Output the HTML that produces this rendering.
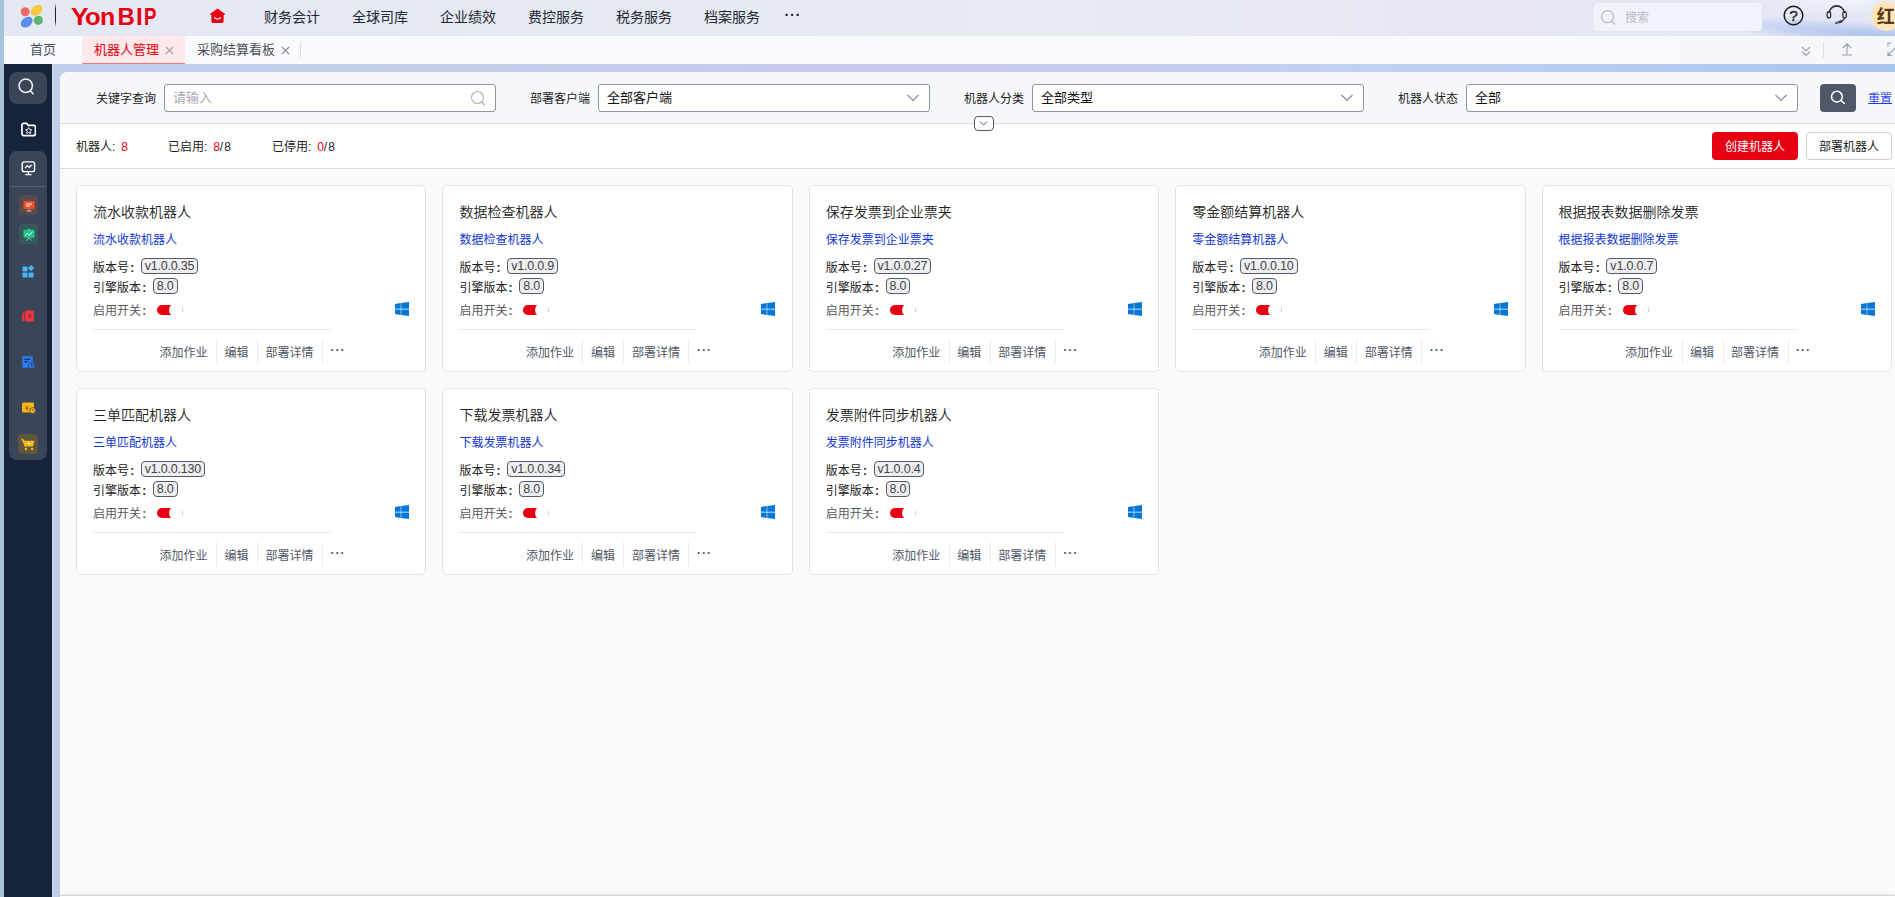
<!DOCTYPE html>
<html lang="zh-CN">
<head>
<meta charset="utf-8">
<title>机器人管理</title>
<style>
*{box-sizing:border-box;margin:0;padding:0}
html,body{width:1895px;height:897px;overflow:hidden}
body{font-family:"Liberation Sans","Noto Sans CJK SC",sans-serif;font-size:12px;color:#333;background:#bccdea;position:relative}
.abs{position:absolute}
#strip{left:0;top:0;width:4px;height:897px;background:#a5c4da}
#topbar{left:4px;top:0;width:1891px;height:36px;background:linear-gradient(90deg,#e4e8f2 0%,#e6e9f2 30%,#e9ebf3 55%,#e6e6f3 80%,#e3e7f5 100%)}
#tabbar{left:4px;top:36px;width:1891px;height:28px;background:linear-gradient(90deg,#f9fafd 0%,#f9fafd 70%,#f5f7fd 100%)}
#side{left:4px;top:64px;width:48px;height:833px;background:#15243b}
#backdrop{left:52px;top:64px;width:1843px;height:833px;background:linear-gradient(90deg,#bfcfea 0%,#c4d0ea 20%,#c9c9ea 42%,#c9cbec 55%,#c0d2f1 72%,#a8c5ee 100%)}
#panel{left:60px;top:72px;width:1835px;height:825px;background:#fafafa;border-top-left-radius:8px;overflow:hidden}
#filter{left:0;top:0;width:1835px;height:52px;background:#f7f8fc;border-bottom:1px solid #d9dbe0}
#stats{left:0;top:52px;width:1835px;height:45px;background:#fff;border-bottom:1px solid #dcdcdc}
.nav{top:9px;font-size:14px;color:#1f2733;line-height:16px;white-space:nowrap}
.tab{top:6px;font-size:13px;line-height:16px;color:#4a4f58;white-space:nowrap}
.flabel{top:20px;font-size:12px;color:#222;line-height:14px;white-space:nowrap}
.fbox{top:12px;height:28px;background:#fff;border:1px solid #8e95a5;border-radius:3px;font-size:13px;color:#111;line-height:26px;padding-left:8px;white-space:nowrap}
.card{width:350.400px;height:187px;background:#fff;border:1px solid #e1e3e8;border-radius:5px}
.card .t{left:16px;top:16.500px;font-size:14px;line-height:18px;color:#222;font-weight:350;white-space:nowrap}
.card .s{left:16px;top:46px;font-size:12px;line-height:16px;color:#1236d2;white-space:nowrap}
.card .r{left:16px;font-size:12px;line-height:16px;color:#222;white-space:nowrap}
.tag{display:inline-block;border:1px solid #555b66;border-radius:4px;background:#eeeff2;color:#444;font-size:12.500px;letter-spacing:-0.200px;line-height:14px;height:16px;padding:0 3px;vertical-align:top;margin-left:3.200px;position:relative;top:-1.500px}
.r u{text-decoration:none;font-weight:bold;margin-left:1.200px}
.card .hr{left:16px;top:143px;width:238px;height:1px;background:#e9e9e9}
.card .a{top:159px;margin-left:-0.500px;font-size:12px;line-height:16px;color:#505766;white-space:nowrap}
.card .v{top:152.500px;margin-left:-1px;width:1px;height:24px;background:#ececec}

.win{left:318px;top:115.600px;width:14px;height:14px}
.sw{left:80px;top:119px;width:26px;height:10px;border-radius:5px;background:linear-gradient(90deg,#e60012 0,#e60012 18px,#fff 18px,#fff 100%);overflow:hidden}
.sw i{position:absolute;left:12px;top:-2px;width:14px;height:14px;border-radius:7px;background:#fff}
.sw:after{content:"";position:absolute;right:0;top:2px;width:1px;height:6px;background:#f9b9be}
.dots{font-size:14px;font-weight:bold;letter-spacing:1px;color:#444;margin-top:-3px}
.stat{top:15px;font-size:12px;line-height:16px;color:#222;white-space:nowrap}
.stat b{font-weight:normal;color:#e60012;margin-left:2.500px}.stat span{letter-spacing:1.100px}
.btn{top:8px;height:28px;border-radius:4px;font-size:12px;line-height:30px;text-align:center;white-space:nowrap}
.ph{color:#a5a9b3;font-size:13px}
.chev{right:9px;top:7.200px}
</style>
</head>
<body>
<div id="strip" class="abs"></div>
<div id="topbar" class="abs" style="overflow:hidden">
<div class="abs" style="left:1700px;top:22px;width:320px;height:26px;border-radius:50%;background:radial-gradient(ellipse at 60% 50%,rgba(150,178,232,.75) 0%,rgba(160,186,236,.45) 40%,rgba(170,195,240,0) 72%);transform:rotate(5deg)"></div>
<div class="abs" style="left:1740px;top:-14px;width:200px;height:30px;border-radius:50%;background:radial-gradient(ellipse at 50% 50%,rgba(240,244,252,.9) 0%,rgba(240,244,252,0) 70%)"></div>
<svg class="abs" style="left:15px;top:4px" width="26" height="26" viewBox="0 0 26 26">
<circle cx="6.200" cy="7.800" r="4.500" fill="#ea6b66"/>
<ellipse cx="17.600" cy="6.400" rx="4.700" ry="6.400" fill="#f7c83f" transform="rotate(52 17.600 6.400)"/>
<ellipse cx="7.700" cy="18.200" rx="4.700" ry="6.400" fill="#5b8def" transform="rotate(52 7.700 18.200)"/>
<circle cx="19.300" cy="16.300" r="4.600" fill="#5cb56c"/>
</svg>
<div class="abs" style="left:51px;top:3px;width:1px;height:24px;background:linear-gradient(180deg,rgba(30,34,44,0) 0%,#1e222c 25%,#1e222c 75%,rgba(30,34,44,0) 100%)"></div>
<div class="abs" aria-label="YonBIP" style="left:67px;top:2.600px;width:100px;height:28px;font-size:24px;line-height:28px;font-weight:bold;color:#e60012"><span class="abs" style="left:0.35px;top:0;transform:scaleX(1.1);transform-origin:0 0">Y</span><span class="abs" style="left:14.2px;top:0;transform:scaleX(1.07);transform-origin:0 0">o</span><span class="abs" style="left:29.1px;top:0;transform:scaleX(1.04);transform-origin:0 0">n</span><span class="abs" style="left:46.5px;top:0;transform:scaleX(1.0);transform-origin:0 0">B</span><span class="abs" style="left:65.1px;top:0;transform:scaleX(1.0);transform-origin:0 0">I</span><span class="abs" style="left:73.0px;top:0;transform:scaleX(0.78);transform-origin:0 0">P</span></div>
<svg class="abs" style="left:205px;top:8px" width="17" height="16" viewBox="0 0 17 16"><path fill="#e60012" d="M8.5.6 16.4 6.2 14.6 7v6.3c0 1-.8 1.8-1.8 1.8H4.2c-1 0-1.800-.8-1.800-1.800V7L.6 6.200z"/><path d="M5.600 9.600c1.600 1.900 4.200 1.900 5.800 0" stroke="#fff" stroke-width="1.300" fill="none" stroke-linecap="round"/></svg>
<div class="nav abs" style="left:260px">财务会计</div>
<div class="nav abs" style="left:348px">全球司库</div>
<div class="nav abs" style="left:436px">企业绩效</div>
<div class="nav abs" style="left:524px">费控服务</div>
<div class="nav abs" style="left:612px">税务服务</div>
<div class="nav abs" style="left:700px">档案服务</div>
<div class="nav abs" style="left:780.500px;top:7px;font-weight:bold;font-size:15px;letter-spacing:.5px">···</div>
<div class="abs" style="left:1590px;top:3px;width:168px;height:28px;border-radius:4px;background:#f0f3fc"></div>
<svg class="abs" style="left:1596px;top:9px" width="17" height="17" viewBox="0 0 17 17"><circle cx="7.600" cy="7.600" r="6" fill="none" stroke="#b9b9b9" stroke-width="1.200"/><path d="M11.800 12.200 14.500 15" stroke="#b9b9b9" stroke-width="1.200" stroke-linecap="round"/></svg>
<div class="abs" style="left:1621px;top:10px;font-size:12px;line-height:16px;color:#bdbdbd">搜索</div>
<svg class="abs" style="left:1778.500px;top:4.700px" width="21" height="21" viewBox="0 0 21 21"><circle cx="10.500" cy="10.500" r="9.300" fill="none" stroke="#1c1c1c" stroke-width="1.500"/><text x="10.500" y="16" font-family="Liberation Sans, sans-serif" font-size="15.500" text-anchor="middle" fill="#1c1c1c" stroke="#1c1c1c" stroke-width="0.350">?</text></svg>
<svg class="abs" style="left:1822px;top:5px" width="21.500" height="22" viewBox="0 0 23 22" preserveAspectRatio="none"><path d="M3.200 8A8.400 8.400 0 0 1 19.800 8" fill="none" stroke="#2e2e2e" stroke-width="1.600"/><rect x="1.300" y="6.600" width="3.600" height="6.400" rx="1.700" fill="none" stroke="#2e2e2e" stroke-width="1.400"/><rect x="18.100" y="6.600" width="3.600" height="6.400" rx="1.700" fill="none" stroke="#2e2e2e" stroke-width="1.400"/><path d="M19.600 13c-.2 1.800-1.200 2.600-2.600 3.200" fill="none" stroke="#2e2e2e" stroke-width="1.300"/><path d="M11 18 16.500 16.400" stroke="#2e2e2e" stroke-width="2.300" stroke-linecap="round"/><path d="M11.400 17.900 13.500 17.300" stroke="#e5e8f4" stroke-width="0.700" stroke-linecap="round"/></svg>
<div class="abs" style="left:1867px;top:1px;width:30px;height:30px;border-radius:15px;background:#fde6bb"></div>
<div class="abs" style="left:1872.800px;top:4.500px;font-size:18px;line-height:24px;font-weight:bold;color:#5a3a0a">红</div>
</div>
<div id="tabbar" class="abs">
<div class="tab abs" style="left:26px">首页</div>
<div class="abs" style="left:78px;top:0;width:103px;height:28px;background:#ffe9ea;border-bottom:1px solid #f7797e"></div>
<div class="tab abs" style="left:90px;color:#e60012">机器人管理</div>
<svg class="abs" style="left:161px;top:10px" width="9" height="9" viewBox="0 0 9 9"><path d="M.8.800 8.200 8.200M8.200.800.8 8.200" stroke="#9c9c9c" stroke-width="1.200"/></svg>
<div class="tab abs" style="left:193px">采购结算看板</div>
<svg class="abs" style="left:277px;top:10px" width="9" height="9" viewBox="0 0 9 9"><path d="M.8.800 8.200 8.200M8.200.800.8 8.200" stroke="#8a8a8a" stroke-width="1.200"/></svg>
<div class="abs" style="left:296px;top:6px;width:1px;height:16px;background:#dcdde2"></div>
<svg class="abs" style="left:1797px;top:10px" width="10" height="11" viewBox="0 0 10 11"><path d="M1 1 5 5 9 1M1 5.500 5 9.500 9 5.500" fill="none" stroke="#9a9ea8" stroke-width="1.100"/></svg>
<div class="abs" style="left:1819px;top:6px;width:1px;height:16px;background:#dcdde2"></div>
<svg class="abs" style="left:1837px;top:6px" width="12" height="15" viewBox="0 0 12 15"><path d="M6 12V2M1.800 6 6 1.800 10.200 6M1.200 13h9.600" fill="none" stroke="#9a9ea8" stroke-width="1.100"/></svg>
<svg class="abs" style="left:1882.500px;top:6px" width="14" height="15" viewBox="0 0 14 15"><path d="M1 4.500V1h3.500M9 1h4v4M1 9.500v4h4M1.500 13 12.500 1.500" fill="none" stroke="#9a9ea8" stroke-width="1.100"/></svg>
</div>
<div id="side" class="abs">
<div class="abs" style="left:5px;top:8px;width:38px;height:32px;border-radius:8px;background:#3a4658"></div>
<svg class="abs" style="left:12.800px;top:12.800px" width="19" height="19" viewBox="0 0 20 20"><circle cx="9.200" cy="9.200" r="7" fill="none" stroke="#f2f2f2" stroke-width="1.600"/><path d="M14 14.500 17 17.600" stroke="#f2f2f2" stroke-width="1.600" stroke-linecap="round"/></svg>
<svg class="abs" style="left:16.600px;top:58px" width="15.400" height="14.500" viewBox="0 0 16 15" preserveAspectRatio="none"><path d="M1 3.300C1 2.200 1.800 1.400 2.900 1.400H5.800l1.800 2.200H13c1.100 0 2 .8 2 1.900V12c0 1.100-.9 2-2 2H3c-1.100 0-2-.9-2-2z" fill="none" stroke="#fff" stroke-width="1.800"/><path d="M8 5.800 9 7.800l2.200.3-1.600 1.500.4 2.200L8 10.800l-2 1 .4-2.200L4.800 8.100 7 7.800z" fill="none" stroke="#fff" stroke-width="1" stroke-linejoin="round"/></svg>
<div class="abs" style="left:5px;top:87px;width:38px;height:308.500px;border-radius:8px;background:#3a4658"></div>
<svg class="abs" style="left:17.200px;top:96.800px" width="14.800" height="15" viewBox="0 0 16 17"><rect x="1" y="1" width="14" height="11" rx="2.500" fill="none" stroke="#fff" stroke-width="1.600"/><path d="M4.200 8 7 5.200 9 7.200 11.800 4.400" fill="none" stroke="#fff" stroke-width="1.400"/><path d="M8 12v3M4.500 15.500h7" stroke="#fff" stroke-width="1.500"/></svg>
<div class="abs" style="left:6px;top:122px;width:36px;height:1px;background:#525d6e"></div>
<div class="abs" style="left:14.500px;top:131px;width:19.500px;height:20px;border-radius:4px;background:#594a52"></div>
<svg class="abs" style="left:18.600px;top:135.700px" width="12" height="12" viewBox="0 0 12 12"><rect x="0.500" y="1" width="11" height="8" rx="1.200" fill="#fb4d25"/><path d="M3 4h6M3 6h4" stroke="#fff" stroke-width="1"/><path d="M6 9v1.500M3.500 11h5" stroke="#f7b5a3" stroke-width="1"/></svg>
<div class="abs" style="left:14.500px;top:160px;width:19.500px;height:20px;border-radius:4px;background:#355a5c"></div>
<svg class="abs" style="left:18.600px;top:164.600px" width="12" height="12" viewBox="0 0 12 12"><rect x="0.500" y="0.800" width="11" height="8" rx="1.200" fill="#1ec68c"/><path d="M2.500 6.500 4.500 4.500 6.500 5.800 9.500 3" stroke="#fff" stroke-width="1" fill="none"/><path d="M6 8.800 3.500 11.500M6 8.800 8.500 11.500" stroke="#8fd9bf" stroke-width="0.900"/><path d="M4.800 0.400h2.400" stroke="#8fd9bf" stroke-width="0.800"/></svg>
<svg class="abs" style="left:18px;top:201px" width="13" height="13" viewBox="0 0 13 13"><rect x="0.500" y="1.500" width="5" height="5" rx="0.800" fill="#45b4f4"/><rect x="0.500" y="7.500" width="5" height="5" rx="0.800" fill="#45b4f4"/><rect x="6.500" y="7.500" width="5" height="5" rx="0.800" fill="#45b4f4"/><rect x="6.800" y="0.800" width="4.600" height="4.600" rx="0.800" fill="#45b4f4" transform="rotate(45 9.100 3.100)"/></svg>
<svg class="abs" style="left:18px;top:246px" width="13" height="12" viewBox="0 0 13 12"><path d="M0 3.500 2.500 1.500V11H1.200C.5 11 0 10.500 0 9.800z" fill="#e8303a"/><rect x="3.200" y="0.500" width="8.700" height="11" rx="1.300" fill="#ee343c"/><path d="M6.200 3.500 7.900 5.500 9.600 3.500M7.900 5.500V8.500M6.400 6.500h3" stroke="#7a3040" stroke-width="0.900" fill="none"/></svg>
<svg class="abs" style="left:18px;top:291.500px" width="13" height="13" viewBox="0 0 13 13"><rect x="0.300" y="0.300" width="10.500" height="11.500" rx="1.400" fill="#2b7cf0"/><path d="M2.300 3.300h6.500M2.300 5.800h3.500" stroke="#16233b" stroke-width="1.100"/><circle cx="9.600" cy="9.600" r="3.200" fill="#2b7cf0" stroke="#3a4658" stroke-width="0.800"/><path d="M9.600 7.900v1.800h1.400" stroke="#16233b" stroke-width="0.800" fill="none"/></svg>
<svg class="abs" style="left:18px;top:338px" width="14" height="12" viewBox="0 0 14 12"><path d="M1.500 0.500h9c.8 0 1.500.7 1.500 1.500v7c0 .8-.7 1.500-1.500 1.500h-9C.7 10.500 0 9.800 0 9V2C0 1.200.7.500 1.500.500z" fill="#f7b614"/><path d="M3.300 4 5 6 6.700 4M5 6v2.500M3.600 6.800h2.800" stroke="#8a5a00" stroke-width="0.900" fill="none"/><circle cx="10.600" cy="8.600" r="3" fill="#f7b614" stroke="#3a4658" stroke-width="0.800"/><path d="M10.600 7v1.700h1.300" stroke="#8a5a00" stroke-width="0.800" fill="none"/></svg>
<div class="abs" style="left:14px;top:370px;width:20px;height:20px;border-radius:4px;background:#5e5640"></div>
<svg class="abs" style="left:17px;top:374px" width="14" height="13" viewBox="0 0 14 13"><path d="M0 .800h2.200l.8 2h10.500l-1.500 5.700H4.200z" fill="#f8b912"/><path d="M2.800 2.500 4.300 8.800" stroke="#f8b912" stroke-width="1.200"/><circle cx="5" cy="11" r="1.300" fill="#f8b912"/><circle cx="11" cy="11" r="1.300" fill="#f8b912"/><path d="M8 4.200v2.600M6.700 5.500h2.600" stroke="#fff" stroke-width="0.900"/></svg>
</div>
<div id="backdrop" class="abs"><div class="abs" style="left:0;top:0;width:1px;height:833px;background:#cbd9f1"></div></div>
<div id="panel" class="abs">
  <div id="filter" class="abs">
<div class="flabel abs" style="left:36px">关键字查询</div>
<div class="fbox abs" style="left:104px;width:332px"><span class="ph">请输入</span>
<svg class="abs" style="right:8px;top:5px" width="17" height="17" viewBox="0 0 17 17"><circle cx="7.500" cy="7.500" r="6" fill="none" stroke="#b5b5b5" stroke-width="1.200"/><path d="M11.800 12 14.500 15" stroke="#b5b5b5" stroke-width="1.200" stroke-linecap="round"/></svg></div>
<div class="flabel abs" style="left:470px">部署客户端</div>
<div class="fbox abs" style="left:538px;width:332px">全部客户端<svg class="chev abs" width="14" height="12" viewBox="0 0 14 12"><path d="M1.500 3 7 8.500 12.500 3" fill="none" stroke="#8a8a8a" stroke-width="1.100"/></svg></div>
<div class="flabel abs" style="left:904px">机器人分类</div>
<div class="fbox abs" style="left:972px;width:332px">全部类型<svg class="chev abs" width="14" height="12" viewBox="0 0 14 12"><path d="M1.500 3 7 8.500 12.500 3" fill="none" stroke="#8a8a8a" stroke-width="1.100"/></svg></div>
<div class="flabel abs" style="left:1338px">机器人状态</div>
<div class="fbox abs" style="left:1406px;width:332px">全部<svg class="chev abs" width="14" height="12" viewBox="0 0 14 12"><path d="M1.500 3 7 8.500 12.500 3" fill="none" stroke="#8a8a8a" stroke-width="1.100"/></svg></div>
<div class="abs" style="left:1760px;top:12px;width:36px;height:28px;border-radius:4px;background:#505766"></div>
<svg class="abs" style="left:1769px;top:17px" width="18" height="18" viewBox="0 0 18 18"><circle cx="7.900" cy="7.700" r="5.400" fill="none" stroke="#fff" stroke-width="1.500"/><path d="M11.900 11.500 15.400 14.500" stroke="#fff" stroke-width="1.500" stroke-linecap="round"/></svg>
<div class="abs" style="left:1808px;top:19px;height:13px;font-size:12px;line-height:16.500px;color:#1c3ee8;font-weight:350;background:linear-gradient(#1c3ee8,#1c3ee8) 0 100%/100% 1px no-repeat">重置</div>
</div>
  <div id="stats" class="abs">
<div class="stat abs" style="left:16px">机器人: <b>8</b></div>
<div class="stat abs" style="left:108px">已启用: <b>8</b><span>/8</span></div>
<div class="stat abs" style="left:212px">已停用: <b>0</b><span>/8</span></div>
<div class="btn abs" style="left:1652px;width:86px;background:#e60012;color:#fff">创建机器人</div>
<div class="btn abs" style="left:1746px;width:86px;background:#fff;color:#222;border:1px solid #cfcfcf;line-height:28px">部署机器人</div>
</div>
<div class="abs" style="left:914px;top:43.500px;width:19.500px;height:15.500px;border:1px solid #505766;border-radius:4px;background:#fff"><svg class="abs" style="left:4px;top:3px" width="9" height="7" viewBox="0 0 9 7"><path d="M1 1.500 4.500 5 8 1.500" fill="none" stroke="#505766" stroke-width="1"/></svg></div>
  <div class="abs" style="left:0;top:823.500px;width:1835px;height:3px;background:#fff;box-shadow:0 -1px 2px rgba(0,0,0,.2)"></div>
<div id="cards">
<div class="card abs" style="left:16.0px;top:113px">
<div class="t abs">流水收款机器人</div>
<div class="s abs">流水收款机器人</div>
<div class="r abs" style="top:73.500px">版本号<u>:</u> <span class="tag">v1.0.0.35</span></div>
<div class="r abs" style="top:93.500px">引擎版本<u>:</u> <span class="tag">8.0</span></div>
<div class="r abs" style="top:116.500px;color:#5a5a5a">启用开关<u>:</u></div>
<div class="sw abs"><i></i></div>
<svg class="win abs" viewBox="0 0 15 15" width="15" height="15"><path fill="#0477d8" d="M0 2.100 6.150 1.200V7.300H0zM6.700 1.150 15 0v7.300H6.700zM0 7.950h6.150v5.850L0 12.900zM6.700 7.950H15V15l-8.300-1.150z"/></svg>
<div class="hr abs"></div>
<div class="a abs" style="left:83px">添加作业</div><div class="v abs" style="left:140px"></div>
<div class="a abs" style="left:148px">编辑</div><div class="v abs" style="left:181px"></div>
<div class="a abs" style="left:189px">部署详情</div><div class="v abs" style="left:246px"></div>
<div class="a abs dots" style="left:254px">···</div>
</div>
<div class="card abs" style="left:382.4px;top:113px">
<div class="t abs">数据检查机器人</div>
<div class="s abs">数据检查机器人</div>
<div class="r abs" style="top:73.500px">版本号<u>:</u> <span class="tag">v1.0.0.9</span></div>
<div class="r abs" style="top:93.500px">引擎版本<u>:</u> <span class="tag">8.0</span></div>
<div class="r abs" style="top:116.500px;color:#5a5a5a">启用开关<u>:</u></div>
<div class="sw abs"><i></i></div>
<svg class="win abs" viewBox="0 0 15 15" width="15" height="15"><path fill="#0477d8" d="M0 2.100 6.150 1.200V7.300H0zM6.700 1.150 15 0v7.300H6.700zM0 7.950h6.150v5.850L0 12.900zM6.700 7.950H15V15l-8.300-1.150z"/></svg>
<div class="hr abs"></div>
<div class="a abs" style="left:83px">添加作业</div><div class="v abs" style="left:140px"></div>
<div class="a abs" style="left:148px">编辑</div><div class="v abs" style="left:181px"></div>
<div class="a abs" style="left:189px">部署详情</div><div class="v abs" style="left:246px"></div>
<div class="a abs dots" style="left:254px">···</div>
</div>
<div class="card abs" style="left:748.8px;top:113px">
<div class="t abs">保存发票到企业票夹</div>
<div class="s abs">保存发票到企业票夹</div>
<div class="r abs" style="top:73.500px">版本号<u>:</u> <span class="tag">v1.0.0.27</span></div>
<div class="r abs" style="top:93.500px">引擎版本<u>:</u> <span class="tag">8.0</span></div>
<div class="r abs" style="top:116.500px;color:#5a5a5a">启用开关<u>:</u></div>
<div class="sw abs"><i></i></div>
<svg class="win abs" viewBox="0 0 15 15" width="15" height="15"><path fill="#0477d8" d="M0 2.100 6.150 1.200V7.300H0zM6.700 1.150 15 0v7.300H6.700zM0 7.950h6.150v5.850L0 12.900zM6.700 7.950H15V15l-8.300-1.150z"/></svg>
<div class="hr abs"></div>
<div class="a abs" style="left:83px">添加作业</div><div class="v abs" style="left:140px"></div>
<div class="a abs" style="left:148px">编辑</div><div class="v abs" style="left:181px"></div>
<div class="a abs" style="left:189px">部署详情</div><div class="v abs" style="left:246px"></div>
<div class="a abs dots" style="left:254px">···</div>
</div>
<div class="card abs" style="left:1115.2px;top:113px">
<div class="t abs">零金额结算机器人</div>
<div class="s abs">零金额结算机器人</div>
<div class="r abs" style="top:73.500px">版本号<u>:</u> <span class="tag">v1.0.0.10</span></div>
<div class="r abs" style="top:93.500px">引擎版本<u>:</u> <span class="tag">8.0</span></div>
<div class="r abs" style="top:116.500px;color:#5a5a5a">启用开关<u>:</u></div>
<div class="sw abs"><i></i></div>
<svg class="win abs" viewBox="0 0 15 15" width="15" height="15"><path fill="#0477d8" d="M0 2.100 6.150 1.200V7.300H0zM6.700 1.150 15 0v7.300H6.700zM0 7.950h6.150v5.850L0 12.900zM6.700 7.950H15V15l-8.300-1.150z"/></svg>
<div class="hr abs"></div>
<div class="a abs" style="left:83px">添加作业</div><div class="v abs" style="left:140px"></div>
<div class="a abs" style="left:148px">编辑</div><div class="v abs" style="left:181px"></div>
<div class="a abs" style="left:189px">部署详情</div><div class="v abs" style="left:246px"></div>
<div class="a abs dots" style="left:254px">···</div>
</div>
<div class="card abs" style="left:1481.6px;top:113px">
<div class="t abs">根据报表数据删除发票</div>
<div class="s abs">根据报表数据删除发票</div>
<div class="r abs" style="top:73.500px">版本号<u>:</u> <span class="tag">v1.0.0.7</span></div>
<div class="r abs" style="top:93.500px">引擎版本<u>:</u> <span class="tag">8.0</span></div>
<div class="r abs" style="top:116.500px;color:#5a5a5a">启用开关<u>:</u></div>
<div class="sw abs"><i></i></div>
<svg class="win abs" viewBox="0 0 15 15" width="15" height="15"><path fill="#0477d8" d="M0 2.100 6.150 1.200V7.300H0zM6.700 1.150 15 0v7.300H6.700zM0 7.950h6.150v5.850L0 12.900zM6.700 7.950H15V15l-8.300-1.150z"/></svg>
<div class="hr abs"></div>
<div class="a abs" style="left:83px">添加作业</div><div class="v abs" style="left:140px"></div>
<div class="a abs" style="left:148px">编辑</div><div class="v abs" style="left:181px"></div>
<div class="a abs" style="left:189px">部署详情</div><div class="v abs" style="left:246px"></div>
<div class="a abs dots" style="left:254px">···</div>
</div>
<div class="card abs" style="left:16.0px;top:316px">
<div class="t abs">三单匹配机器人</div>
<div class="s abs">三单匹配机器人</div>
<div class="r abs" style="top:73.500px">版本号<u>:</u> <span class="tag">v1.0.0.130</span></div>
<div class="r abs" style="top:93.500px">引擎版本<u>:</u> <span class="tag">8.0</span></div>
<div class="r abs" style="top:116.500px;color:#5a5a5a">启用开关<u>:</u></div>
<div class="sw abs"><i></i></div>
<svg class="win abs" viewBox="0 0 15 15" width="15" height="15"><path fill="#0477d8" d="M0 2.100 6.150 1.200V7.300H0zM6.700 1.150 15 0v7.300H6.700zM0 7.950h6.150v5.850L0 12.900zM6.700 7.950H15V15l-8.300-1.150z"/></svg>
<div class="hr abs"></div>
<div class="a abs" style="left:83px">添加作业</div><div class="v abs" style="left:140px"></div>
<div class="a abs" style="left:148px">编辑</div><div class="v abs" style="left:181px"></div>
<div class="a abs" style="left:189px">部署详情</div><div class="v abs" style="left:246px"></div>
<div class="a abs dots" style="left:254px">···</div>
</div>
<div class="card abs" style="left:382.4px;top:316px">
<div class="t abs">下载发票机器人</div>
<div class="s abs">下载发票机器人</div>
<div class="r abs" style="top:73.500px">版本号<u>:</u> <span class="tag">v1.0.0.34</span></div>
<div class="r abs" style="top:93.500px">引擎版本<u>:</u> <span class="tag">8.0</span></div>
<div class="r abs" style="top:116.500px;color:#5a5a5a">启用开关<u>:</u></div>
<div class="sw abs"><i></i></div>
<svg class="win abs" viewBox="0 0 15 15" width="15" height="15"><path fill="#0477d8" d="M0 2.100 6.150 1.200V7.300H0zM6.700 1.150 15 0v7.300H6.700zM0 7.950h6.150v5.850L0 12.900zM6.700 7.950H15V15l-8.300-1.150z"/></svg>
<div class="hr abs"></div>
<div class="a abs" style="left:83px">添加作业</div><div class="v abs" style="left:140px"></div>
<div class="a abs" style="left:148px">编辑</div><div class="v abs" style="left:181px"></div>
<div class="a abs" style="left:189px">部署详情</div><div class="v abs" style="left:246px"></div>
<div class="a abs dots" style="left:254px">···</div>
</div>
<div class="card abs" style="left:748.8px;top:316px">
<div class="t abs">发票附件同步机器人</div>
<div class="s abs">发票附件同步机器人</div>
<div class="r abs" style="top:73.500px">版本号<u>:</u> <span class="tag">v1.0.0.4</span></div>
<div class="r abs" style="top:93.500px">引擎版本<u>:</u> <span class="tag">8.0</span></div>
<div class="r abs" style="top:116.500px;color:#5a5a5a">启用开关<u>:</u></div>
<div class="sw abs"><i></i></div>
<svg class="win abs" viewBox="0 0 15 15" width="15" height="15"><path fill="#0477d8" d="M0 2.100 6.150 1.200V7.300H0zM6.700 1.150 15 0v7.300H6.700zM0 7.950h6.150v5.850L0 12.900zM6.700 7.950H15V15l-8.300-1.150z"/></svg>
<div class="hr abs"></div>
<div class="a abs" style="left:83px">添加作业</div><div class="v abs" style="left:140px"></div>
<div class="a abs" style="left:148px">编辑</div><div class="v abs" style="left:181px"></div>
<div class="a abs" style="left:189px">部署详情</div><div class="v abs" style="left:246px"></div>
<div class="a abs dots" style="left:254px">···</div>
</div>
</div>
</div>
</body>
</html>
